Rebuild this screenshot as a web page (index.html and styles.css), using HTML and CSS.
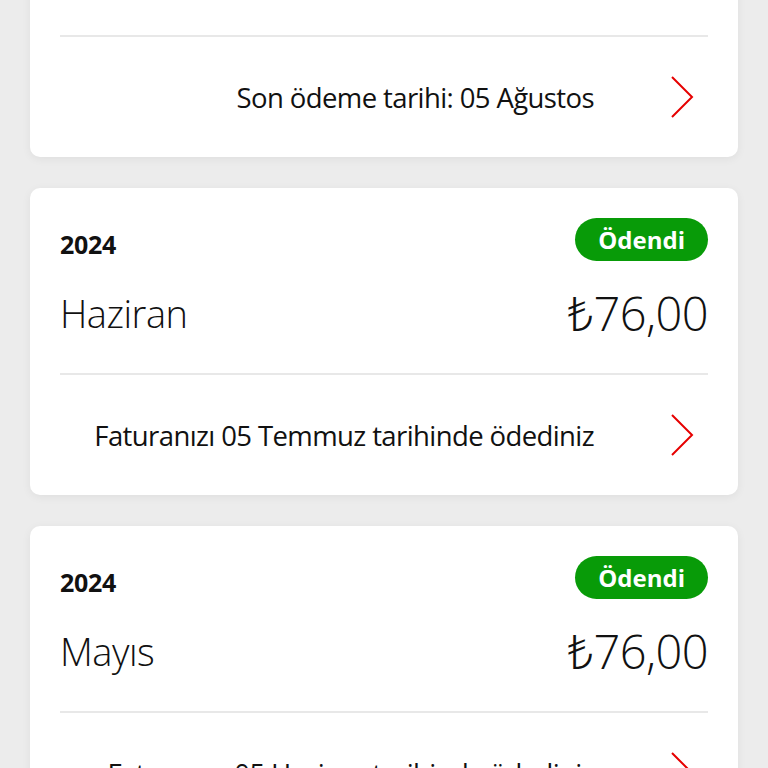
FILE: index.html
```html
<!DOCTYPE html>
<html lang="tr">
<head>
  <meta charset="UTF-8">
  <meta name="viewport" content="width=device-width, initial-scale=1.0">
  <title>Faturalarım</title>
  <link rel="stylesheet" href="styles.css">
</head>
<body>
<div class="bill-list">
  <!-- Current bill (scrolled partly out of view) -->
  <div class="bill-card">
    <div class="bill-head">
      <span class="bill-year">2024</span>
      <span class="badge badge-due">Ödenmedi</span>
    </div>
    <div class="bill-main">
      <span class="bill-month">Temmuz</span>
      <span class="bill-amount">₺76,00</span>
    </div>
    <a class="bill-foot" href="#">
      <span class="bill-note">Son ödeme tarihi: 05 Ağustos</span>
      <svg class="chevron" viewBox="0 0 24 42" width="24" height="42"><path d="M2 1 L22 21 L2 41" /></svg>
    </a>
  </div>

  <div class="bill-card">
    <div class="bill-head">
      <span class="bill-year">2024</span>
      <span class="badge">Ödendi</span>
    </div>
    <div class="bill-main">
      <span class="bill-month">Haziran</span>
      <span class="bill-amount">₺76,00</span>
    </div>
    <a class="bill-foot" href="#">
      <span class="bill-note">Faturanızı 05 Temmuz tarihinde ödediniz</span>
      <svg class="chevron" viewBox="0 0 24 42" width="24" height="42"><path d="M2 1 L22 21 L2 41" /></svg>
    </a>
  </div>

  <div class="bill-card">
    <div class="bill-head">
      <span class="bill-year">2024</span>
      <span class="badge">Ödendi</span>
    </div>
    <div class="bill-main">
      <span class="bill-month">Mayıs</span>
      <span class="bill-amount">₺76,00</span>
    </div>
    <a class="bill-foot" href="#">
      <span class="bill-note">Faturanızı 05 Haziran tarihinde ödediniz</span>
      <svg class="chevron" viewBox="0 0 24 42" width="24" height="42"><path d="M2 1 L22 21 L2 41" /></svg>
    </a>
  </div>
</div>
</body>
</html>
```

FILE: styles.css
```css
body {
  margin: 0;
  padding: 0;
  background-color: #ececec;
  font-family: "Open Sans", "Noto Sans", sans-serif;
  color: #111;
  overflow: hidden;
}
.bill-list {
  display: flex;
  flex-direction: column;
  gap: 31px;
  padding: 0 30px;
  margin-top: -150px; /* list is scrolled */
}
.bill-card {
  background: white;
  border-radius: 10px;
  box-shadow: 0 2px 10px rgba(0, 0, 0, 0.06);
  padding: 0 30px;
}
.bill-head {
  display: flex;
  justify-content: space-between;
  align-items: center;
  padding-top: 30px;
  height: 43px;
}
.bill-year {
  font-size: 25px;
  font-weight: 700;
  margin-top: 8px;
  letter-spacing: -0.3px;
}
.badge {
  background-color: #089b08;
  color: white;
  font-size: 24px;
  font-weight: 700;
  height: 43px;
  line-height: 43px;
  padding: 0 23px;
  border-radius: 22px;
}
.bill-main {
  display: flex;
  justify-content: space-between;
  align-items: center;
  height: 80px;
  border-bottom: 2px solid #e8e8e8;
  padding-bottom: 20px;
  margin-top: 12px;
}
.bill-month {
  font-size: 38px;
  font-weight: 300;
  letter-spacing: -0.5px;
}
.bill-amount {
  font-size: 47px;
  font-weight: 300;
  letter-spacing: -0.6px;
}
.bill-foot {
  display: flex;
  justify-content: flex-end;
  align-items: center;
  gap: 76px;
  height: 120px;
  color: #111;
  text-decoration: none;
  padding-right: 14px;
}
.bill-note {
  font-size: 27.5px;
  letter-spacing: -0.6px;
}
.chevron {
  fill: none;
  stroke: #e60000;
  stroke-width: 2;
}
```
